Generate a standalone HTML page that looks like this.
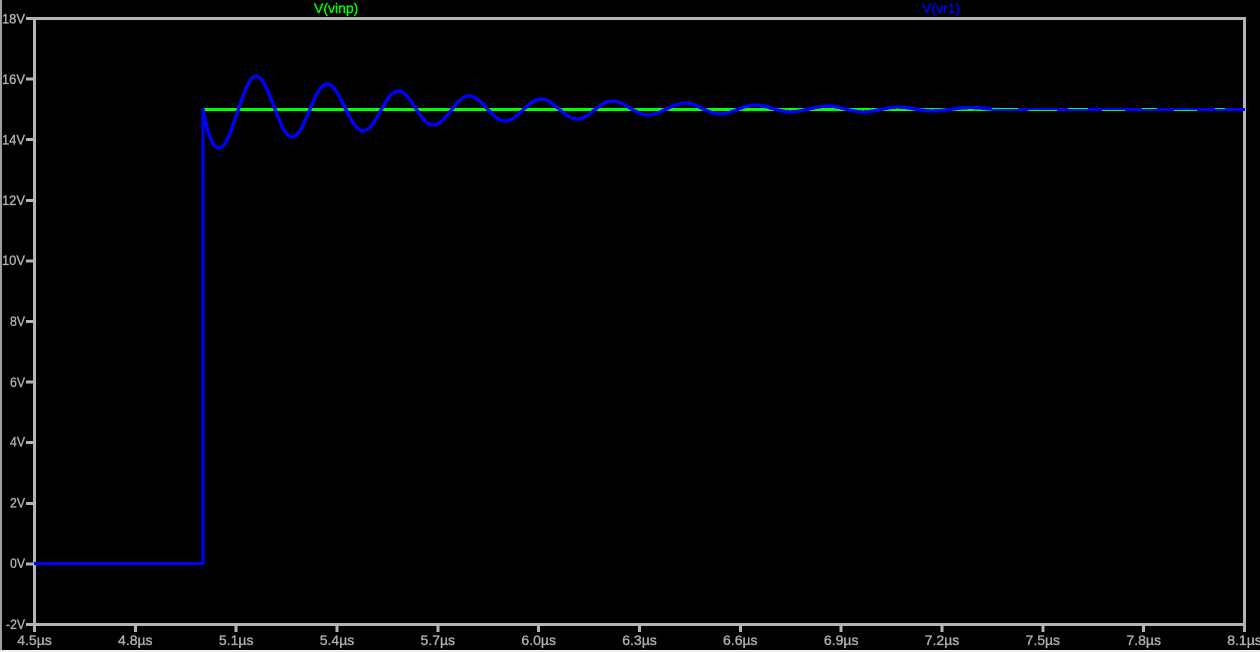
<!DOCTYPE html>
<html>
<head>
<meta charset="utf-8">
<title>Waveform</title>
<style>
html,body{margin:0;padding:0;background:#000;width:1260px;height:652px;overflow:hidden}
svg{display:block}
text{font-family:"Liberation Sans",sans-serif;font-size:14px;stroke-width:.35px}
.y{fill:#b0b0b0;stroke:#b0b0b0;text-anchor:end}
.x{fill:#b0b0b0;stroke:#b0b0b0;text-anchor:middle}
</style>
</head>
<body>
<svg width="1260" height="652" viewBox="0 0 1260 652" xmlns="http://www.w3.org/2000/svg">
<rect width="1260" height="652" fill="#000"/>
<rect x="0" y="0" width="2" height="650" fill="#a0a0a0"/>
<rect x="0" y="650" width="1260" height="2" fill="#f0f0f0"/>

<g shape-rendering="crispEdges" stroke="#b4b4b4" stroke-width="3" fill="none">
<path d="M34.5 18.5H1244.5V624.5H34.5Z"/>
<path d="M26 18.5H34M26 79.1H34M26 139.7H34M26 200.3H34M26 260.9H34M26 321.5H34M26 382.1H34M26 442.7H34M26 503.3H34M26 563.9H34M26 624.5H34"/>
<path d="M34.5 625V632M135.3 625V632M236.2 625V632M337 625V632M437.8 625V632M538.7 625V632M639.5 625V632M740.3 625V632M841.2 625V632M942 625V632M1042.8 625V632M1143.7 625V632M1244.5 625V632"/>
</g>

<path d="M203 109.5H1245" stroke="#00ff00" stroke-width="3" fill="none" shape-rendering="crispEdges"/>
<path d="M34 563.5H203V109.5C206 125 211 148 219 148C232 148 243 76 256 76C269 76 279 137 292 137C305 137 314 84 327 84C340 84 350 131 363 131C376 131 385 91 398 91C411 91 420 125 433 125C446 125 456 96 469 96C482 96 492 121 505 121C518 121 528 99 541 99C554 99 564 119 577 119C590 119 599 101 612 101C625 101 635 115 648 115C661 115 672 103 685 103C698 103 707 114 720 114C733 114 742 105 755 105C768 105 777 112 790 112C803 112 815 106 828 106C841 106 850 112 863 112C876 112 885 107 898 107C911 107 919 111 932 111C945 111 957 107.5 970 107.5C983 107.5 990 109.5 1000 109.5C1015 109.5 1025 109.5 1040 109.5C1060 109.5 1070 109.5 1090 109.5H1245" stroke="#0000ff" stroke-width="3.4" fill="none" stroke-linejoin="round" shape-rendering="crispEdges"/>
<g fill="#00ff00" shape-rendering="crispEdges">
<rect x="992" y="108" width="26" height="1"/>
<rect x="1068" y="108" width="20" height="1"/>
<rect x="1142" y="108" width="15" height="1"/>
<rect x="1215" y="108" width="10" height="1"/>
<rect x="1028" y="110" width="29" height="1"/>
<rect x="1102" y="110" width="23" height="1"/>
<rect x="1174" y="110" width="23" height="1"/>
</g>

<text class="y" x="25" y="23.5" textLength="23" lengthAdjust="spacingAndGlyphs">18V</text>
<text class="y" x="25" y="84" textLength="23" lengthAdjust="spacingAndGlyphs">16V</text>
<text class="y" x="25" y="144.5" textLength="23" lengthAdjust="spacingAndGlyphs">14V</text>
<text class="y" x="25" y="205" textLength="23" lengthAdjust="spacingAndGlyphs">12V</text>
<text class="y" x="25" y="265" textLength="23" lengthAdjust="spacingAndGlyphs">10V</text>
<text class="y" x="25" y="326" textLength="15" lengthAdjust="spacingAndGlyphs">8V</text>
<text class="y" x="25" y="387" textLength="15" lengthAdjust="spacingAndGlyphs">6V</text>
<text class="y" x="25" y="446.5" textLength="15" lengthAdjust="spacingAndGlyphs">4V</text>
<text class="y" x="25" y="507.5" textLength="15" lengthAdjust="spacingAndGlyphs">2V</text>
<text class="y" x="25" y="568" textLength="15" lengthAdjust="spacingAndGlyphs">0V</text>
<text class="y" x="25" y="629" textLength="19" lengthAdjust="spacingAndGlyphs">-2V</text>

<text class="x" x="34.5" y="645">4.5µs</text>
<text class="x" x="135.3" y="645">4.8µs</text>
<text class="x" x="236.2" y="645">5.1µs</text>
<text class="x" x="337" y="645">5.4µs</text>
<text class="x" x="437.8" y="645">5.7µs</text>
<text class="x" x="538.7" y="645">6.0µs</text>
<text class="x" x="639.5" y="645">6.3µs</text>
<text class="x" x="740.3" y="645">6.6µs</text>
<text class="x" x="841.2" y="645">6.9µs</text>
<text class="x" x="942" y="645">7.2µs</text>
<text class="x" x="1042.8" y="645">7.5µs</text>
<text class="x" x="1143.7" y="645">7.8µs</text>
<text class="x" x="1244.5" y="645">8.1µs</text>

<text x="314" y="13" fill="#00ff00" stroke="#00ff00">V(vinp)</text>
<text x="922" y="13" fill="#0000ff" stroke="#0000ff">V(vr1)</text>
</svg>
</body>
</html>
